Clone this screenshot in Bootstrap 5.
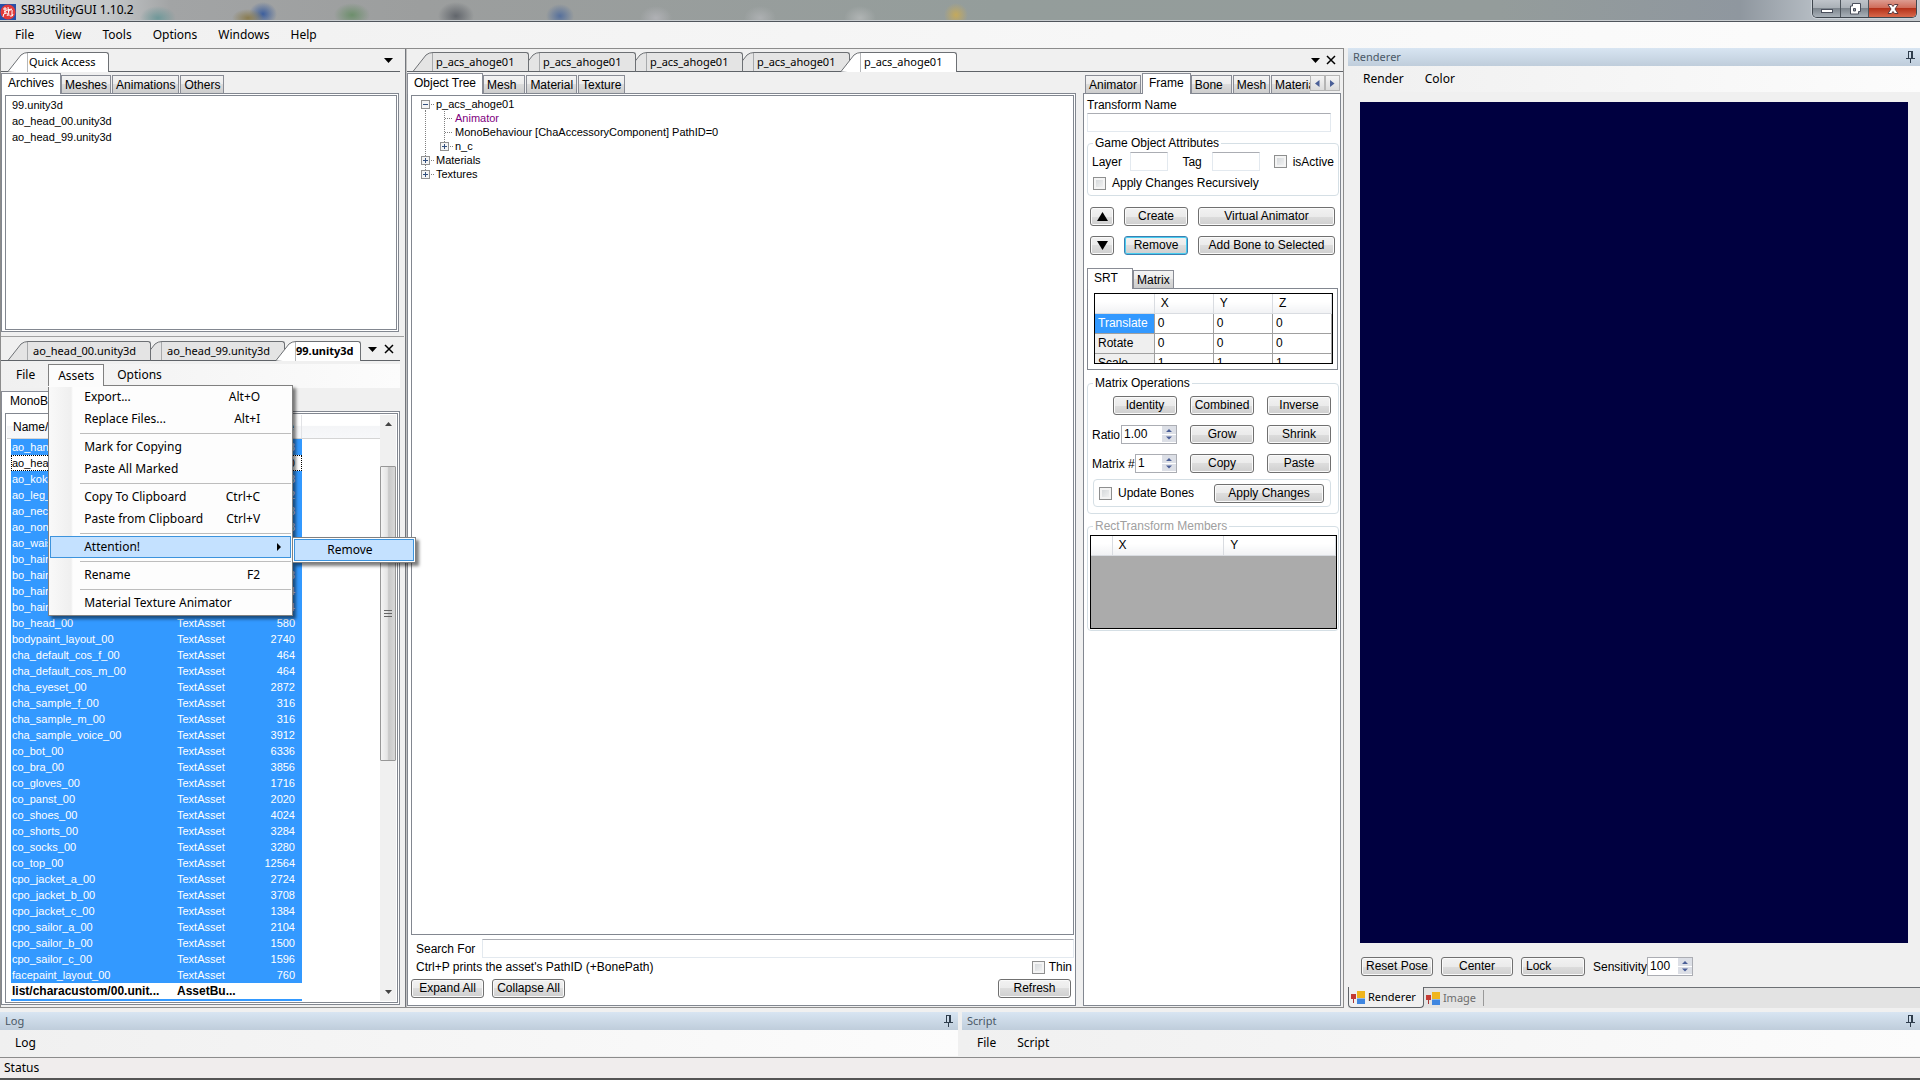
<!DOCTYPE html>
<html lang="en">
<head>
<meta charset="utf-8">
<meta name="viewport" content="width=device-width, initial-scale=1">
<title>SB3UtilityGUI 1.10.2</title>
<link rel="stylesheet" href="https://cdn.jsdelivr.net/npm/bootstrap@5.3.0/dist/css/bootstrap.min.css">
<style>
:root{--edge:#828790;--face:#f0f0f0;--sel:#3399ff;--ui:"Noto Sans","Open Sans",sans-serif;--gothic:"Liberation Sans",Arial,sans-serif}
body{height:100vh;overflow:hidden;background:var(--face);color:#000;font:12px/14px var(--gothic)}
button{color:#000;font:inherit;white-space:nowrap}
.min0{min-width:0;min-height:0}
/* window frame */
.glass{height:22px;border-bottom:1px solid #50555c;box-shadow:inset 0 -1px #c9cdd0;
 background:radial-gradient(ellipse 18px 12px at 158px 18px,#6f9899,transparent),radial-gradient(ellipse 16px 9px at 248px 18px,#8a7c50,transparent),radial-gradient(ellipse 14px 12px at 263px 14px,#3d5f9d,transparent),radial-gradient(ellipse 18px 12px at 352px 15px,#6d8f6c,transparent),radial-gradient(ellipse 18px 14px at 456px 16px,#62666c,transparent),radial-gradient(ellipse 14px 12px at 560px 16px,#56709c,transparent),radial-gradient(ellipse 16px 12px at 656px 18px,#b0b1b5,transparent),radial-gradient(ellipse 16px 12px at 760px 18px,#adb0b2,transparent),radial-gradient(ellipse 16px 12px at 860px 18px,#b0b4b4,transparent),radial-gradient(ellipse 12px 12px at 956px 15px,#c4a95c,transparent),linear-gradient(90deg,#d3d6d9 0,#c3c6c8 110px,#a2a4a5 170px,#9c9e9e 420px,#949d9b 1000px,#949c9b 1500px,#8f979f 1740px,#b3bac1 1810px,#c4cbd2)}
.glass h1{font:12px/20px var(--ui);padding-left:1px}
.capbtns{height:18px;border:1px solid #3f464e;border-top:0;border-radius:0 0 5px 5px;overflow:hidden;box-shadow:0 0 0 1px #ccd2d8;margin-right:3px}
.capbtns button{border:0;border-right:1px solid #4d545c;background:linear-gradient(#bfc4ca 0,#a9afb6 48%,#7d858d 50%,#a9b1b9);width:28px;padding:0;line-height:0}
.capbtns .closer{width:47px;border:0;background:linear-gradient(#dd9c90 0,#cf6a57 48%,#b5321a 50%,#d8694c)}
/* menus */
.menu-strip{font:12px/18px var(--ui);height:26px;gap:1px;padding-left:5px;background:linear-gradient(90deg,#f0f0f0,#fcfcfc)}
.menu-strip button{border:0;background:none;padding:0 10px;height:22px}
.asset-menu{margin-top:3px;height:24px;gap:3px}
.drop{position:absolute;z-index:30;left:0;top:21px;width:245px;border:1px solid #808080;background:linear-gradient(90deg,#f9f9f9 0,#efefef 22px,#fdfdfd 24px);box-shadow:3px 3px 3px rgba(0,0,0,.5);padding:0 1px 1px}
.drop .item{display:flex;justify-content:space-between;width:100%;height:22px;padding:0 30px 0 33px;border:1px solid transparent;align-items:center}
.drop hr{margin:3px 0 2px 30px;height:1px;border:0;background:#bdbdbd;opacity:1}
.menu-strip .hot{background:#c4e1ff;border:1px solid #3c93dd}
.opener{border:1px solid #808080!important;border-bottom:0!important;background:#fcfcfc!important;position:relative;z-index:31;padding:0 9px!important;box-shadow:0 1px #fcfcfc}
.sub{position:absolute;z-index:32;left:243px;top:151px;width:124px;border:1px solid #808080;background:#fff;padding:1px;box-shadow:3px 3px 3px rgba(0,0,0,.5)}
.drop .sub .item{padding:0 32px}
/* document tabs */
.doc-tabs{flex-shrink:0;height:23px;padding:3px 0 0 7px;border-bottom:1px solid #5f6368;font:11px/18px var(--ui)}
.doc-tab{display:flex;border:0;background:none;padding:0;height:20px;position:relative;margin-left:-9px;margin-bottom:-1px}
.doc-tab:first-child{margin-left:0}
.doc-tab:nth-child(1){z-index:5}.doc-tab:nth-child(2){z-index:4}.doc-tab:nth-child(3){z-index:3}.doc-tab:nth-child(4){z-index:2}
.doc-tab svg{width:20px;height:20px;flex:none}
.doc-tab span{height:20px;padding:0 13px 0 3px;flex:1;text-align:left;border:solid #6d7074;border-width:1px 1px 0 0;border-radius:0 3px 0 0;background:#e4e4e4}
.doc-tab path{fill:#e4e4e4;stroke:#6d7074}
.doc-tab .base{fill:none;stroke:#5f6368}
.doc-tab .flat{border-bottom:1px solid #5f6368}
.doc-tab.on{z-index:9}.doc-tab.on span,.doc-tab.on path{background:#fff;fill:#fff}
.doc-tab.wide{min-width:143px}.doc-tab.wide span{padding:0 12px 0 5px}
.doc-tab.mid{min-width:116px}
.doc-tab.slim span{padding:0 12px 0 1px}
.doc-tab.fw-bold span{padding:0 6px 0 0}
.glyph{border:0;background:none;padding:0;width:16px;height:16px;line-height:0}
/* control tabs */
.tabs{height:21px;margin-bottom:-1px;position:relative;z-index:1}
.tabs button{height:19px;line-height:18px;padding:0 3px;border:1px solid #898c95;border-bottom-color:var(--edge);margin-right:1px;background:linear-gradient(#f3f3f3 0,#ebebeb 50%,#dcdcdc 50%,#cdcdcd)}
.tabs .on{height:21px;padding:0 6px 3px;background:#fff;border-bottom:0;margin-right:0}
.tabs .roomy{padding-right:8px}
.page{background:#fff;border:1px solid var(--edge)}
.box{background:#fff;border:1px solid var(--edge)}
/* dock title */
.cap{height:18px;font:11px/18px var(--ui);color:#4a5866;background:linear-gradient(#d8e5f2,#bfcddb);padding:0 5px}
/* left dock */
.docked{border:1px solid #8c8c8c;border-width:1px 1px 1px 0}
.left-dock{width:406px;border-left:1px solid #8c8c8c;border-right:1px solid #73767c;padding-right:1px}
.quick{height:288px;border-bottom:1px solid #a0a0a0}
.quick .dock-body{padding:1px 5px 4px 0}
.inner-list{margin:1px;margin-left:3px;padding:1px 6px}
.rows{font-size:11px;line-height:14px}
.rows>div{height:16px;padding-top:1px}
.assets>.doc-tabs{margin-top:1px}
.assets .dock-body{padding:3px 4px 2px 0}
.asset-box{margin:1px 1px 1px 3px;padding:1px}
.head-cell{width:295px;padding:0 7px 0 6px;border-right:1px solid #e2e3e6}
.grid-list{border-collapse:collapse;table-layout:fixed;width:291px;margin-left:4px;font-size:11px;line-height:14px}
.grid-list td{height:16px;padding:1px;overflow:hidden;white-space:nowrap;background:var(--sel);color:#fff}
.grid-list td:last-child{text-align:right;padding-right:7px}
.grid-list .cur{outline:1px dotted #000;outline-offset:-1px}
.grid-list .cur td{background:#fff;color:#000}
.grid-list .strong td{background:#fff;color:#000;font-size:12px;font-weight:bold;border-bottom:2px solid var(--sel)}
.list-head{height:24px;border-bottom:1px solid #d5d5d5;background:linear-gradient(#fff 45%,#f4f5f7 50%,#f7f8fa);line-height:24px}
.vbar{width:16px;background:#f0f0f0}
.thumb{height:295px;margin-top:30px;border:1px solid #979797;border-radius:1px;background:linear-gradient(90deg,#f4f4f4,#e4e4e4 45%,#c8c8c8 55%,#d8d8d8)}
/* object tree */
.doc-dock{border-left:1px solid #c0c0c0}
.doc-dock .doc-tabs{padding-left:6px}
.doc-body{padding:1px 2px 1px 0;gap:7px}
.tree-page{padding:1px 1px 7px 3px}
.tree{padding:1px 0 0 8px;list-style:none;font-size:11px;line-height:14px;margin:0}
.tree li{display:flex;height:14px;align-items:center}
.tree svg{height:14px;flex:none}
.violet{color:#800080}
.dots{stroke:#808080;stroke-dasharray:1 1;fill:none}
.knob{fill:#f4f4f4;stroke:#919191}.sign{stroke:#33507e;fill:none}
.search-row{padding:4px 0 0 5px;gap:7px}
.hint-row{padding:0 2px 0 5px;height:18px}
.act-row{padding:3px 3px 0 0}
.wide-btn{width:73px}
/* inputs */
.push{height:19px;line-height:15px;padding:0;border:1px solid #707070;border-radius:3px;background:linear-gradient(#f2f2f2 0,#ebebeb 50%,#dddddd 50%,#cfcfcf);box-shadow:inset 0 0 0 1px #fafafa;text-align:center}
.push.focus{border-color:#3c7fb1;box-shadow:inset 0 0 0 1px #48cdf0}
.push.text-start{padding-left:4px}
.w64{width:64px}.w24{width:24px}.w110{width:110px}
.field{height:19px;min-width:0;border:1px solid #e3e9ef;border-top-color:#abadb3;background:#fff;padding:0 3px;font:inherit}
.tick{appearance:none;width:13px;height:13px;margin:0;flex:none;border:1px solid #8e8f8f;background:linear-gradient(135deg,#cfd3d6,#f7f7f7);box-shadow:inset 0 0 0 2px #f4f4f4}
.spin{display:flex;height:19px;border:1px solid #abadb3;background:#fff}
.spin input{border:0;padding:0 0 2px 2px;width:10px;flex:1;min-width:0;font:inherit;appearance:textfield;-moz-appearance:textfield}
.spin input::-webkit-inner-spin-button{display:none}
.spin svg{width:14px;height:16px;flex:none}
.s-ratio{width:56px}.s-num{width:42px}.s-sens{width:46px}
.group{border:1px solid #d5dfe5;border-radius:4px;margin:0;min-width:0}
.group>legend{float:none;width:auto;font-size:12px;line-height:14px;margin:0 0 0 5px;padding:0 2px;background:#fff}
.group>.faded{color:#a0a0a0}
/* property panel */
.props{width:258px}
.props-page{padding:4px 0 0 3px}
.prop-tabs{padding-left:2px;width:227px;overflow:hidden}
.prop-tabs button{flex:none}
.scrollers{padding-top:2px}
.scrollers button{width:15px;height:16px;padding:0;line-height:0;border:1px solid #b5b5b5;background:linear-gradient(#f4f4f4,#dcdcdc)}
.tname{display:block;width:244px;margin-top:1px}
.g-attr{height:60px;margin:4px 0 0;width:252px}
.attr-row{padding:2px 4px 0}
.f-layer{width:40px;margin:0 14px 0 8px}.f-tag{width:50px;margin:0 14px 0 10px}
.gap6{gap:6px}
.recur{padding:5px 0 0 5px}
.btn-lines{padding:11px 5px 0 3px;display:flex;flex-direction:column;gap:10px}
.btn-lines>div{gap:10px}
.srt{padding-top:13px;width:251px}
.srt-on{width:46px;text-align:left}
.srt-page{padding:4px 4px 5px 6px}
.cells{border:1px solid #000;background:#fff;overflow:hidden}
.cells table{border-collapse:collapse;table-layout:fixed;width:100%}
.cells th,.cells td{height:20px;padding:0 3px;font-weight:400;border:1px solid #a0a0a0;border-width:0 1px 1px 0}
.cells thead th{height:19px;padding:0 6px;background:linear-gradient(#fff 40%,#f1f2f4);border-color:#d9dce1}
.cells tbody th{background:#efefef}
.cells tbody .pick{background:var(--sel);color:#fff}
.srt-cells{height:71px}
.g-ops{margin-top:6px;width:252px;height:138px}
.ops-line{gap:13px;padding:6px 7px 4px 4px}
.g-upd{height:28px;margin:2px 7px 0 5px;padding:0 6px 0 5px}
.g-rect{margin-top:5px;width:252px;height:112px}
.cells.rect-cells{height:94px;margin:2px 1px 0 2px;background:#ababab}
/* renderer */
.render-side{width:30%;padding-left:4px}
.view3d{background:#000040;margin:10px 12px 0}
.cam-row{padding:14px 13px 11px;gap:8px}
.cam{width:72px}
.foot-tabs{height:21px;border-top:1px solid #6d7074;background:#e3e3e3;font:11px/18px var(--ui)}
.foot-tabs button{border:0;background:none;padding:0 7px 0 2px;color:#6d6d6d;display:flex;align-items:center;gap:3px}
.foot-tabs .on{background:#f0f0f0;color:#000;border:solid #5f6368;border-width:0 1px 1px;border-radius:0 0 4px 4px;margin-top:-1px}
.foot-tabs .img-tab{border-right:1px solid #999;margin:2px 0}
/* bottom */
.low{padding:4px 0 1px}
.half{flex:1 1 0}
.status{height:23px;background:#f0eded;border-top:1px solid #8c8c8c;border-bottom:2px solid #555;font:12px/20px var(--ui);padding-left:4px}
</style>
</head>
<body class="d-flex flex-column">

<header class="glass d-flex justify-content-between flex-shrink-0">
 <div class="d-flex gap-1">
  <svg width="16" height="16" viewBox="0 0 16 16" class="mt-1"><rect width="16" height="16" fill="#2850a8"/><circle cx="8" cy="8" r="7.500" fill="#e23a3a"/><g fill="none" stroke="#fff"><path d="M5 3v7M3 5h4M3 13q0-4 3-4t1 3M8 3l1 9M9 7q4-3 3 1v4M10 12q3 1 3-2M4 8q4-3 8-3"/></g></svg>
  <h1 class="m-0">SB3UtilityGUI 1.10.2</h1>
 </div>
 <div class="capbtns d-flex">
  <button aria-label="Minimize"><svg width="14" height="14" viewBox="0 0 14 14"><rect x="1.500" y="7.500" width="11" height="3" fill="#fff" stroke="#4a4f5c"/></svg></button>
  <button aria-label="Restore"><svg width="14" height="14" viewBox="0 0 14 14"><path d="M4.500 1.500h8v8h-2v2.500h-8v-8h2z" fill="#fff" stroke="#4a4f5c"/><path d="M5.500 6.500h2v2.500h-2z" fill="#9aa1aa" stroke="#4a4f5c"/></svg></button>
  <button class="closer" aria-label="Close"><svg width="14" height="14" viewBox="0 0 14 14"><path d="M2 2.500h3.500L7 4.500l1.500-2H12L9 7l3 4.500H8.500L7 9.500l-1.500 2H2L5 7z" fill="#fff" stroke="#5a3a40"/></svg></button>
 </div>
</header>

<nav class="menu-strip d-flex flex-shrink-0 align-items-center">
 <button>File</button><button>View</button><button>Tools</button><button>Options</button><button>Windows</button><button>Help</button>
</nav>

<main class="d-flex flex-grow-1 min0">
 <div class="docked d-flex flex-grow-1 min0">

  <!-- left dock -->
  <section class="left-dock d-flex flex-column flex-shrink-0">
   <div class="quick d-flex flex-column">
    <div class="doc-tabs d-flex justify-content-between me-1">
     <div class="d-flex"><button class="doc-tab slim on"><svg viewBox="0 0 20 20"><path d="M0 19.500L13 3Q16 .5 20 .5V21"/></svg><span>Quick Access</span></button></div>
     <button class="glyph me-1" aria-label="Window list"><svg width="9" height="5"><path d="M0 0h9L4.500 5z"/></svg></button>
    </div>
    <div class="dock-body d-flex flex-column flex-grow-1 min0">
     <div class="tabs d-flex align-items-end"><button class="on">Archives</button><button>Meshes</button><button>Animations</button><button>Others</button></div>
     <div class="page flex-grow-1 d-flex"><div class="box flex-grow-1 inner-list">
      <div class="rows"><div>99.unity3d</div><div>ao_head_00.unity3d</div><div>ao_head_99.unity3d</div></div>
     </div></div>
    </div>
   </div>

   <div class="assets d-flex flex-column flex-grow-1 min0">
    <div class="doc-tabs d-flex me-1">
     <div class="d-flex"><button class="doc-tab wide"><svg viewBox="0 0 20 20"><path d="M0 19.500L13 3Q16 .5 20 .5V21"/><path class="base" d="M0 19.500h20"/></svg><span class="flat">ao_head_00.unity3d</span></button><button class="doc-tab wide"><svg viewBox="0 0 20 20"><path d="M0 19.500L13 3Q16 .5 20 .5V21"/><path class="base" d="M0 19.500h20"/></svg><span class="flat">ao_head_99.unity3d</span></button><button class="doc-tab on fw-bold"><svg viewBox="0 0 20 20"><path d="M0 19.500L13 3Q16 .5 20 .5V21"/></svg><span>99.unity3d</span></button></div>
     <button class="glyph ms-1" aria-label="Window list"><svg width="9" height="5"><path d="M0 0h9L4.500 5z"/></svg></button>
     <button class="glyph" aria-label="Close"><svg width="10" height="10"><path d="M1 1l8 8M9 1L1 9" stroke="#000" stroke-width="1.500"/></svg></button>
    </div>
    <nav class="menu-strip asset-menu d-flex me-1">
     <button>File</button>
     <div class="position-relative">
      <button class="opener">Assets</button>
      <div class="drop">
       <button class="item"><span>Export...</span><span>Alt+O</span></button>
       <button class="item"><span>Replace Files...</span><span>Alt+I</span></button>
       <hr>
       <button class="item"><span>Mark for Copying</span></button>
       <button class="item"><span>Paste All Marked</span></button>
       <hr>
       <button class="item"><span>Copy To Clipboard</span><span>Ctrl+C</span></button>
       <button class="item"><span>Paste from Clipboard</span><span>Ctrl+V</span></button>
       <hr>
       <button class="item hot pe-2"><span>Attention!</span><svg width="6" height="8"><path d="M1 0l4 4-4 4z"/></svg></button>
       <hr>
       <button class="item"><span>Rename</span><span>F2</span></button>
       <hr>
       <button class="item"><span>Material Texture Animator</span></button>
       <div class="sub"><button class="item hot">Remove</button></div>
      </div>
     </div>
     <button>Options</button>
    </nav>
    <div class="dock-body d-flex flex-column flex-grow-1 min0">
     <div class="tabs d-flex align-items-end"><button class="on ps-2">MonoBehaviour</button></div>
     <div class="page flex-grow-1 d-flex min0"><div class="box asset-box flex-grow-1 d-flex min0">
      <div class="flex-grow-1 overflow-hidden">
       <div class="list-head d-flex"><span class="head-cell d-flex justify-content-between"><span>Name/Type</span><span>Size</span></span></div>
       <table class="grid-list">
        <colgroup><col style="width:165px"><col style="width:66px"><col style="width:60px"></colgroup>
        <tbody>
        <tr><td>ao_hand_00</td><td>TextAsset</td><td>1248</td></tr>
        <tr class="cur"><td>ao_head_00</td><td>TextAsset</td><td>1420</td></tr>
        <tr><td>ao_kokan_00</td><td>TextAsset</td><td>248</td></tr>
        <tr><td>ao_leg_00</td><td>TextAsset</td><td>732</td></tr>
        <tr><td>ao_neck_00</td><td>TextAsset</td><td>648</td></tr>
        <tr><td>ao_none_00</td><td>TextAsset</td><td>288</td></tr>
        <tr><td>ao_waist_00</td><td>TextAsset</td><td>696</td></tr>
        <tr><td>bo_hair_b_00</td><td>TextAsset</td><td>4824</td></tr>
        <tr><td>bo_hair_f_00</td><td>TextAsset</td><td>4728</td></tr>
        <tr><td>bo_hair_o_00</td><td>TextAsset</td><td>944</td></tr>
        <tr><td>bo_hair_s_00</td><td>TextAsset</td><td>1324</td></tr>
        <tr><td>bo_head_00</td><td>TextAsset</td><td>580</td></tr>
        <tr><td>bodypaint_layout_00</td><td>TextAsset</td><td>2740</td></tr>
        <tr><td>cha_default_cos_f_00</td><td>TextAsset</td><td>464</td></tr>
        <tr><td>cha_default_cos_m_00</td><td>TextAsset</td><td>464</td></tr>
        <tr><td>cha_eyeset_00</td><td>TextAsset</td><td>2872</td></tr>
        <tr><td>cha_sample_f_00</td><td>TextAsset</td><td>316</td></tr>
        <tr><td>cha_sample_m_00</td><td>TextAsset</td><td>316</td></tr>
        <tr><td>cha_sample_voice_00</td><td>TextAsset</td><td>3912</td></tr>
        <tr><td>co_bot_00</td><td>TextAsset</td><td>6336</td></tr>
        <tr><td>co_bra_00</td><td>TextAsset</td><td>3856</td></tr>
        <tr><td>co_gloves_00</td><td>TextAsset</td><td>1716</td></tr>
        <tr><td>co_panst_00</td><td>TextAsset</td><td>2020</td></tr>
        <tr><td>co_shoes_00</td><td>TextAsset</td><td>4024</td></tr>
        <tr><td>co_shorts_00</td><td>TextAsset</td><td>3284</td></tr>
        <tr><td>co_socks_00</td><td>TextAsset</td><td>3280</td></tr>
        <tr><td>co_top_00</td><td>TextAsset</td><td>12564</td></tr>
        <tr><td>cpo_jacket_a_00</td><td>TextAsset</td><td>2724</td></tr>
        <tr><td>cpo_jacket_b_00</td><td>TextAsset</td><td>3708</td></tr>
        <tr><td>cpo_jacket_c_00</td><td>TextAsset</td><td>1384</td></tr>
        <tr><td>cpo_sailor_a_00</td><td>TextAsset</td><td>2104</td></tr>
        <tr><td>cpo_sailor_b_00</td><td>TextAsset</td><td>1500</td></tr>
        <tr><td>cpo_sailor_c_00</td><td>TextAsset</td><td>1596</td></tr>
        <tr><td>facepaint_layout_00</td><td>TextAsset</td><td>760</td></tr>
        <tr class="strong"><td>list/characustom/00.unit...</td><td>AssetBu...</td><td></td></tr>
        </tbody>
       </table>
      </div>
      <div class="vbar d-flex flex-column text-center">
       <svg width="16" height="21"><path d="M5 11l3.500-4 3.500 4z" fill="#444"/></svg>
       <div class="thumb d-flex align-items-center justify-content-center"><svg width="8" height="9"><path d="M0 1.500h8M0 4.500h8M0 7.500h8" stroke="#666"/></svg></div>
       <svg width="16" height="20" class="mt-auto"><path d="M5 9l3.500 4 3.500-4z" fill="#444"/></svg>
      </div>
     </div></div>
    </div>
   </div>
  </section>

  <!-- document dock -->
  <section class="doc-dock d-flex flex-column flex-grow-1 min0">
   <div class="doc-tabs d-flex justify-content-between">
    <div class="d-flex"><button class="doc-tab mid"><svg viewBox="0 0 20 20"><path d="M0 19.500L13 3Q16 .5 20 .5V21"/><path class="base" d="M0 19.500h20"/></svg><span class="flat">p_acs_ahoge01</span></button><button class="doc-tab mid"><svg viewBox="0 0 20 20"><path d="M0 19.500L13 3Q16 .5 20 .5V21"/><path class="base" d="M0 19.500h20"/></svg><span class="flat">p_acs_ahoge01</span></button><button class="doc-tab mid"><svg viewBox="0 0 20 20"><path d="M0 19.500L13 3Q16 .5 20 .5V21"/><path class="base" d="M0 19.500h20"/></svg><span class="flat">p_acs_ahoge01</span></button><button class="doc-tab mid"><svg viewBox="0 0 20 20"><path d="M0 19.500L13 3Q16 .5 20 .5V21"/><path class="base" d="M0 19.500h20"/></svg><span class="flat">p_acs_ahoge01</span></button><button class="doc-tab mid on"><svg viewBox="0 0 20 20"><path d="M0 19.500L13 3Q16 .5 20 .5V21"/></svg><span>p_acs_ahoge01</span></button></div>
    <div class="d-flex me-1"><button class="glyph" aria-label="Window list"><svg width="9" height="5"><path d="M0 0h9L4.500 5z"/></svg></button>
    <button class="glyph" aria-label="Close"><svg width="10" height="10"><path d="M1 1l8 8M9 1L1 9" stroke="#000" stroke-width="1.500"/></svg></button></div>
   </div>
   <div class="d-flex flex-grow-1 min0 doc-body">
    <div class="d-flex flex-column flex-grow-1 min0">
     <div class="tabs d-flex align-items-end"><button class="on">Object Tree</button><button class="roomy">Mesh</button><button>Material</button><button>Texture</button></div>
     <div class="page tree-page flex-grow-1 d-flex flex-column">
      <div class="box flex-grow-1">
       <ul class="tree">
        <li><svg width="16"><path class="dots" d="M5.500 11v3M11 7.500h4"/><rect class="knob" x="1.500" y="3.500" width="8" height="8"/><path class="sign" d="M3 7.500h5"/></svg>p_acs_ahoge01</li>
        <li><svg width="35"><path class="dots" d="M5.500 0v14M24.500 0v14M25 7.500h8"/></svg><span class="violet">Animator</span></li>
        <li><svg width="35"><path class="dots" d="M5.500 0v14M24.500 0v14M25 7.500h8"/></svg>MonoBehaviour [ChaAccessoryComponent] PathID=0</li>
        <li><svg width="35"><path class="dots" d="M5.500 0v14M24.500 0v3M30 7.500h4"/><rect class="knob" x="20.500" y="3.500" width="8" height="8"/><path class="sign" d="M22 7.500h5M24.500 5v5"/></svg>n_c</li>
        <li><svg width="16"><path class="dots" d="M5.500 0v3M5.500 12v2M11 7.500h4"/><rect class="knob" x="1.500" y="3.500" width="8" height="8"/><path class="sign" d="M3 7.500h5M5.500 5v5"/></svg>Materials</li>
        <li><svg width="16"><path class="dots" d="M5.500 0v3M11 7.500h4"/><rect class="knob" x="1.500" y="3.500" width="8" height="8"/><path class="sign" d="M3 7.500h5M5.500 5v5"/></svg>Textures</li>
       </ul>
      </div>
      <div class="search-row d-flex align-items-center"><label for="find">Search For</label><input id="find" class="field flex-grow-1"></div>
      <div class="hint-row d-flex justify-content-between align-items-center"><span>Ctrl+P prints the asset's PathID (+BonePath)</span><label class="d-flex gap-1 align-items-center"><input type="checkbox" class="tick">Thin</label></div>
      <div class="act-row d-flex gap-2"><button class="push wide-btn">Expand All</button><button class="push wide-btn">Collapse All</button><button class="push wide-btn ms-auto">Refresh</button></div>
     </div>
    </div>

    <div class="props d-flex flex-column flex-shrink-0">
     <div class="d-flex">
      <div class="tabs prop-tabs d-flex align-items-end"><button>Animator</button><button class="on">Frame</button><button class="roomy">Bone</button><button>Mesh</button><button>Material</button></div>
      <div class="d-flex scrollers"><button aria-label="Scroll left"><svg width="5" height="7"><path d="M4.500 0v7L0 3.500z" fill="#4a5f97"/></svg></button><button aria-label="Scroll right"><svg width="5" height="7"><path d="M0 0v7l4.500-3.500z" fill="#4a5f97"/></svg></button></div>
     </div>
     <div class="page props-page flex-grow-1">
      <label for="tname" class="d-block">Transform Name</label>
      <input id="tname" class="field tname">
      <fieldset class="group g-attr"><legend>Game Object Attributes</legend>
       <div class="d-flex align-items-center attr-row"><label for="layer">Layer</label><input id="layer" class="field f-layer"><label for="tag">Tag</label><input id="tag" class="field f-tag"><label class="d-flex align-items-center gap6"><input type="checkbox" class="tick">isActive</label></div>
       <label class="d-flex align-items-center gap6 recur"><input type="checkbox" class="tick">Apply Changes Recursively</label>
      </fieldset>
      <div class="btn-lines">
       <div class="d-flex"><button class="push w24" aria-label="Up"><svg width="11" height="9"><path d="M5.500 0L11 9H0z"/></svg></button><button class="push w64">Create</button><button class="push flex-grow-1">Virtual Animator</button></div>
       <div class="d-flex"><button class="push w24" aria-label="Down"><svg width="11" height="9"><path d="M5.500 9L11 0H0z"/></svg></button><button class="push w64 focus">Remove</button><button class="push flex-grow-1">Add Bone to Selected</button></div>
      </div>
      <div class="srt">
       <div class="tabs d-flex align-items-end"><button class="on srt-on">SRT</button><button>Matrix</button></div>
       <div class="page srt-page"><div class="cells srt-cells"><table>
        <thead><tr><th></th><th>X</th><th>Y</th><th>Z</th></tr></thead>
        <tbody><tr><th class="pick">Translate</th><td>0</td><td>0</td><td>0</td></tr><tr><th>Rotate</th><td>0</td><td>0</td><td>0</td></tr><tr><th>Scale</th><td>1</td><td>1</td><td>1</td></tr></tbody>
       </table></div></div>
      </div>
      <fieldset class="group g-ops"><legend>Matrix Operations</legend>
       <div class="ops-line d-flex justify-content-end"><button class="push w64">Identity</button><button class="push w64">Combined</button><button class="push w64">Inverse</button></div>
       <div class="ops-line d-flex"><div class="d-flex flex-grow-1 align-items-center justify-content-between"><label for="ratio">Ratio</label><span class="spin s-ratio"><input id="ratio" type="number" value="1.00" step="0.01"><svg viewBox="0 0 14 16"><path d="M0 0h14v8H0zM0 9h14v7H0z" fill="#dcdfe6"/><path d="M4 6l3-3 3 3zM4 10.500l3 3 3-3z" fill="#4a5f97"/></svg></span></div><button class="push w64">Grow</button><button class="push w64">Shrink</button></div>
       <div class="ops-line d-flex"><div class="d-flex flex-grow-1 align-items-center justify-content-between"><label for="mnum">Matrix #</label><span class="spin s-num"><input id="mnum" type="number" value="1"><svg viewBox="0 0 14 16"><path d="M0 0h14v8H0zM0 9h14v7H0z" fill="#dcdfe6"/><path d="M4 6l3-3 3 3zM4 10.500l3 3 3-3z" fill="#4a5f97"/></svg></span></div><button class="push w64">Copy</button><button class="push w64">Paste</button></div>
       <div class="group g-upd d-flex align-items-center justify-content-between"><label class="d-flex align-items-center gap6"><input type="checkbox" class="tick">Update Bones</label><button class="push w110">Apply Changes</button></div>
      </fieldset>
      <fieldset class="group g-rect"><legend class="faded">RectTransform Members</legend>
       <div class="cells rect-cells"><table><colgroup><col style="width:21px"><col><col></colgroup><thead><tr><th></th><th>X</th><th>Y</th></tr></thead></table></div>
      </fieldset>
     </div>
    </div>
   </div>
  </section>
 </div>

 <!-- renderer dock -->
 <section class="render-side d-flex flex-column flex-shrink-0">
  <div class="cap d-flex justify-content-between align-items-center"><span>Renderer</span><svg width="9" height="12"><path d="M2.500 0v7M2 .5h4M5.500 0v7M6.500 0v7M0 7.500h9M4.500 8v4" stroke="#2f3d4c" fill="none"/></svg></div>
  <nav class="menu-strip d-flex align-items-center"><button>Render</button><button>Color</button></nav>
  <div class="view3d flex-grow-1"></div>
  <div class="cam-row d-flex align-items-center"><button class="push cam">Reset Pose</button><button class="push cam">Center</button><button class="push w64 text-start">Lock</button><div class="d-flex align-items-center"><label for="sens">Sensitivity</label><span class="spin s-sens"><input id="sens" type="number" value="100"><svg viewBox="0 0 14 16"><path d="M0 0h14v8H0zM0 9h14v7H0z" fill="#dcdfe6"/><path d="M4 6l3-3 3 3zM4 10.500l3 3 3-3z" fill="#4a5f97"/></svg></span></div></div>
  <div class="foot-tabs d-flex">
   <button class="on"><svg width="14" height="14"><path d="M6 1h8v7H6z" fill="#f0b51e"/><path d="M6 8.500h8V14H6z" fill="#3f86e0"/><path d="M0 4h5v5H0z" fill="#c43a34"/><path d="M2.500 9v4" stroke="#a33"/></svg>Renderer</button>
   <button class="img-tab"><svg width="14" height="14"><path d="M6 1h8v7H6z" fill="#f0b51e"/><path d="M6 8.500h8V14H6z" fill="#3f86e0"/><path d="M0 4h5v5H0z" fill="#c43a34"/><path d="M2.500 9v4" stroke="#a33"/></svg>Image</button>
  </div>
 </section>
</main>

<footer class="flex-shrink-0">
 <div class="d-flex gap-1 low">
  <section class="half"><div class="cap d-flex justify-content-between align-items-center"><span>Log</span><svg width="9" height="12"><path d="M2.500 0v7M2 .5h4M5.500 0v7M6.500 0v7M0 7.500h9M4.500 8v4" stroke="#2f3d4c" fill="none"/></svg></div><nav class="menu-strip d-flex align-items-center"><button>Log</button></nav></section>
  <section class="half"><div class="cap d-flex justify-content-between align-items-center"><span>Script</span><svg width="9" height="12"><path d="M2.500 0v7M2 .5h4M5.500 0v7M6.500 0v7M0 7.500h9M4.500 8v4" stroke="#2f3d4c" fill="none"/></svg></div><nav class="menu-strip d-flex align-items-center"><button>File</button><button>Script</button></nav></section>
 </div>
 <div class="status">Status</div>
</footer>
<script src="https://cdn.jsdelivr.net/npm/bootstrap@5.3.0/dist/js/bootstrap.bundle.min.js"></script>
</body>
</html>
